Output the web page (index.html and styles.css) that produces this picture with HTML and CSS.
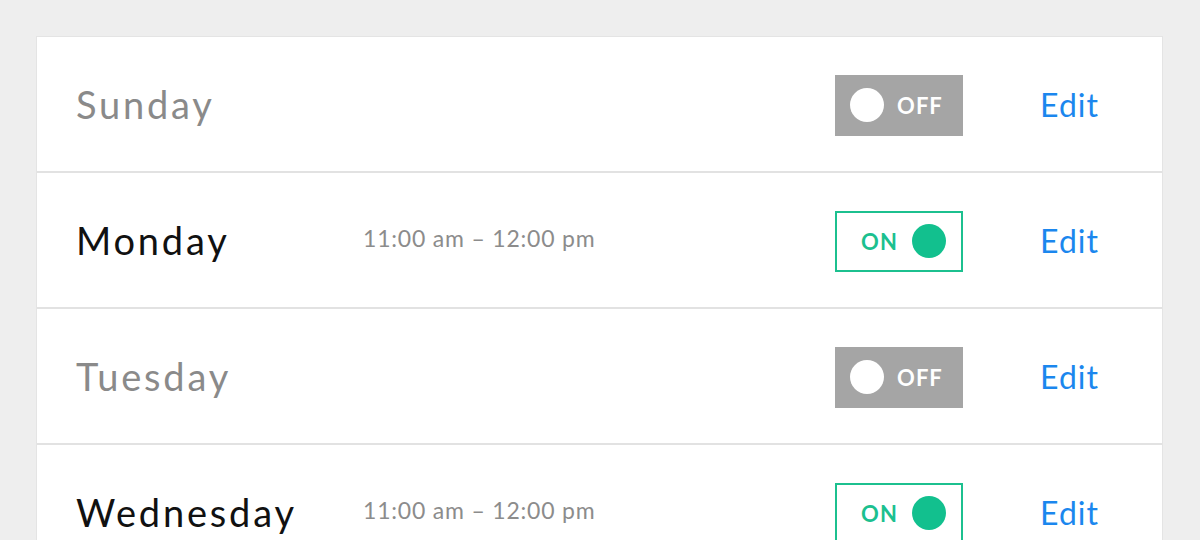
FILE: index.html
```html
<!DOCTYPE html>
<html lang="en">
<head>
  <meta charset="UTF-8">
  <title>Opening Hours</title>
  <link rel="stylesheet" href="styles.css">
</head>
<body>
  <div class="schedule">
    <div class="day-row">
      <span class="day-name off">Sunday</span>
      <span class="hours"></span>
      <div class="toggle toggle-off"><span class="knob"></span><span class="toggle-label">OFF</span></div>
      <a href="#" class="edit">Edit</a>
    </div>
    <div class="day-row">
      <span class="day-name">Monday</span>
      <span class="hours">11:00 am – 12:00 pm</span>
      <div class="toggle toggle-on"><span class="toggle-label">ON</span><span class="knob"></span></div>
      <a href="#" class="edit">Edit</a>
    </div>
    <div class="day-row">
      <span class="day-name off">Tuesday</span>
      <span class="hours"></span>
      <div class="toggle toggle-off"><span class="knob"></span><span class="toggle-label">OFF</span></div>
      <a href="#" class="edit">Edit</a>
    </div>
    <div class="day-row">
      <span class="day-name">Wednesday</span>
      <span class="hours">11:00 am – 12:00 pm</span>
      <div class="toggle toggle-on"><span class="toggle-label">ON</span><span class="knob"></span></div>
      <a href="#" class="edit">Edit</a>
    </div>
  </div>
</body>
</html>
```

FILE: styles.css
```css
body {
  font-family: Lato, "Noto Sans", sans-serif;
  background-color: #eeeeee;
  margin: 0;
  padding: 36px 0 0 36px;
}

.schedule {
  width: 1125px;
  background-color: #fff;
  border: 1px solid #e4e4e4;
  border-bottom: none;
}

.day-row {
  display: flex;
  align-items: center;
  height: 134px;
  padding: 0 63px 0 39px;
  border-bottom: 2px solid #e2e2e2;
}

.day-name {
  width: 287px;
  font-size: 38px;
  letter-spacing: 2.8px;
  color: #111;
}

.day-name.off {
  color: #8a8a8a;
}

.hours {
  flex: 1;
  font-size: 23px;
  letter-spacing: 0.8px;
  color: #8c8c8c;
  padding-bottom: 4px;
}

.toggle {
  width: 128px;
  height: 61px;
  margin-top: 2px;
  box-sizing: border-box;
  display: flex;
  align-items: center;
  font-weight: bold;
  font-size: 22px;
  letter-spacing: 1px;
}

.toggle-off {
  background-color: #a5a5a5;
  color: #fff;
  padding-left: 15px;
}

.toggle-off .knob {
  background-color: #fff;
  margin-right: 13px;
}

.toggle-on {
  border: 2px solid #1cc08f;
  color: #1cc08f;
  padding-left: 24px;
}

.toggle-on .knob {
  background-color: #12c08e;
  margin-left: 14px;
}

.knob {
  width: 34px;
  height: 34px;
  border-radius: 50%;
}

.edit {
  margin-left: 77px;
  font-size: 32px;
  letter-spacing: 1px;
  color: #1b87ee;
  text-decoration: none;
}
```
